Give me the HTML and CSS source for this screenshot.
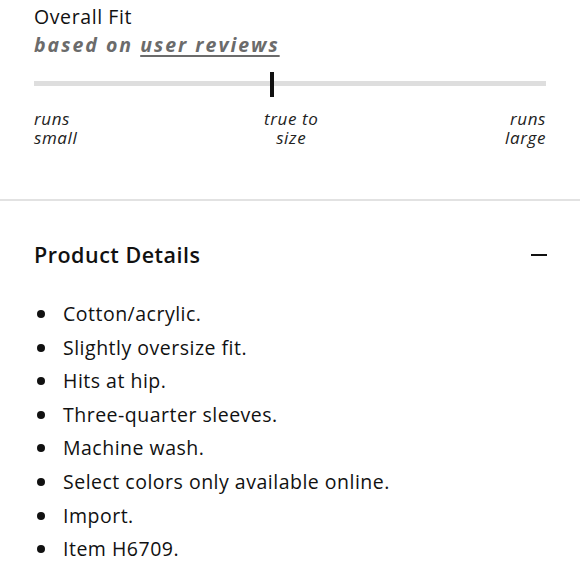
FILE: index.html
```html
<!DOCTYPE html>
<html lang="en">
<head>
<meta charset="utf-8">
<title>Overall Fit</title>
<link rel="stylesheet" href="styles.css">
</head>
<body>
<section class="fit">
  <h2 class="fit-title">Overall Fit</h2>
  <p class="fit-sub">based on <a href="#" class="fit-link">user reviews</a></p>
  <div class="meter">
    <div class="meter-track"></div>
    <div class="meter-tick"></div>
  </div>
  <div class="scale">
    <span class="scale-label left">runs<br>small</span>
    <span class="scale-label mid">true to<br>size</span>
    <span class="scale-label right">runs<br>large</span>
  </div>
</section>
<section class="details">
  <div class="details-head">
    <h2 class="details-title">Product Details</h2>
    <span class="minus"></span>
  </div>
  <ul class="details-list">
    <li>Cotton/acrylic.</li>
    <li>Slightly oversize fit.</li>
    <li>Hits at hip.</li>
    <li>Three-quarter sleeves.</li>
    <li>Machine wash.</li>
    <li>Select colors only available online.</li>
    <li>Import.</li>
    <li>Item H6709.</li>
  </ul>
</section>
</body>
</html>
```
FILE: styles.css
```css
html, body {
  margin: 0;
  padding: 0;
  background: #fff;
}
body {
  font-family: "Open Sans", "Noto Sans", sans-serif;
  color: #111;
  width: 580px;
}
.fit {
  padding: 3px 34px 0;
  height: 196px;
  border-bottom: 2px solid #e2e2e2;
}
.fit-title {
  margin: 0;
  font-size: 19.5px;
  font-weight: 400;
  letter-spacing: 0.6px;
  line-height: 28px;
}
.fit-sub {
  margin: 0;
  font-size: 19.5px;
  font-weight: 700;
  font-style: italic;
  letter-spacing: 2px;
  color: #6b6b6b;
  line-height: 28px;
}
.fit-link {
  color: #6b6b6b;
  text-decoration: underline;
  text-decoration-thickness: 1.5px;
  text-underline-offset: 3px;
}
.meter {
  position: relative;
  height: 25px;
  margin-top: 13px;
}
.meter-track {
  position: absolute;
  left: 0;
  right: 0;
  top: 9px;
  height: 5px;
  background: #dedede;
}
.meter-tick {
  position: absolute;
  left: 236px;
  top: 0;
  width: 4px;
  height: 25px;
  background: #111;
}
.scale {
  display: flex;
  justify-content: space-between;
  margin-top: 12px;
  font-size: 17px;
  font-style: italic;
  line-height: 19px;
  color: #222;
  letter-spacing: 0.6px;
}
.scale-label.mid { text-align: center; }
.scale-label.right { text-align: right; }
.details {
  padding: 0 33px 0 34px;
}
.details-head {
  display: flex;
  align-items: center;
  justify-content: space-between;
  margin-top: 40px;
}
.details-title {
  margin: 0;
  font-size: 21.5px;
  font-weight: 600;
  line-height: 28px;
  letter-spacing: 0.5px;
}
.minus {
  width: 16px;
  height: 2.5px;
  background: #111;
}
.details-list {
  list-style: none;
  margin: 28px 0 0;
  padding: 0;
}
.details-list li {
  position: relative;
  padding-left: 29px;
  font-size: 19.5px;
  line-height: 33.6px;
  letter-spacing: 0.5px;
}
.details-list li::before {
  content: "";
  position: absolute;
  left: 3px;
  top: 13px;
  width: 8px;
  height: 8px;
  border-radius: 50%;
  background: #111;
}
```
